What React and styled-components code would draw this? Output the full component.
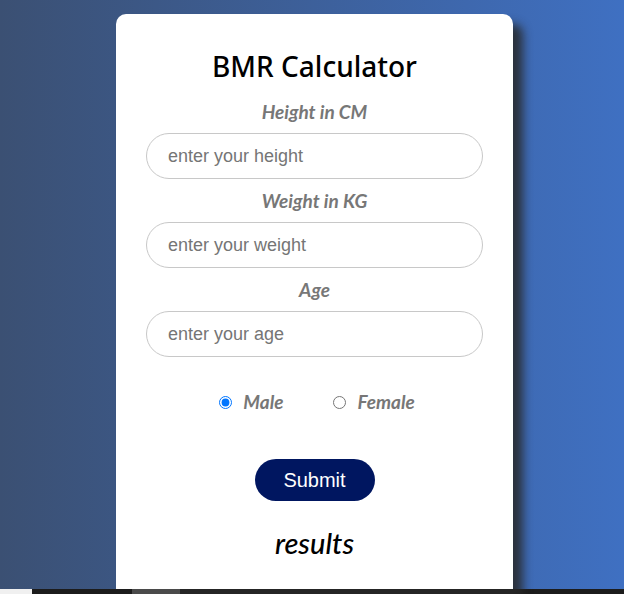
import React, { useState } from "react";
import styled, { createGlobalStyle } from "styled-components";

const GlobalStyle = createGlobalStyle`
  html, body {
    margin: 0;
    padding: 0;
    overflow: hidden;
  }
  body {
    font-family: "Liberation Sans", Arial, sans-serif;
  }
`;

function App() {
  const [gender, setGender] = useState("male");

  return (
    <>
      <GlobalStyle />
      <Page>
        <Card>
          <Title>BMR Calculator</Title>
          <Label htmlFor="height">Height in CM</Label>
          <Input id="height" type="number" placeholder="enter your height" />
          <Label htmlFor="weight">Weight in KG</Label>
          <Input id="weight" type="number" placeholder="enter your weight" />
          <Label htmlFor="age">Age</Label>
          <Input id="age" type="number" placeholder="enter your age" />

          <RadioRow>
            <RadioOption>
              <Radio
                type="radio"
                name="gender"
                checked={gender === "male"}
                onChange={() => setGender("male")}
              />
              Male
            </RadioOption>
            <RadioOption>
              <Radio
                type="radio"
                name="gender"
                checked={gender === "female"}
                onChange={() => setGender("female")}
              />
              Female
            </RadioOption>
          </RadioRow>

          <SubmitButton type="button">Submit</SubmitButton>
          <Results>results</Results>
        </Card>
      </Page>
      <BottomBar>
        <BarPiece $width={32} $color="#f0f0f0" />
        <BarPiece $width={100} $color="#1c1c1c" />
        <BarPiece $width={48} $color="#4a4a4a" />
      </BottomBar>
    </>
  );
}

export default App;

const Page = styled.main`
  background: linear-gradient(to right, #3b5073, #3f70c2);
  display: flex;
  justify-content: center;
  height: 589px;
  padding-top: 14px;
  box-sizing: border-box;
`;

const Card = styled.section`
  background: #fff;
  border-radius: 10px 10px 0 0;
  box-shadow: 10px 10px 10px rgba(40, 40, 40, 0.85);
  box-sizing: border-box;
  display: flex;
  flex-direction: column;
  align-items: center;
  margin-left: 5px;
  padding: 35px 30px 0;
  width: 397px;
`;

const Title = styled.h1`
  color: #000;
  font-family: "Noto Sans", "Open Sans", sans-serif;
  font-size: 28px;
  font-weight: 500;
  line-height: 34px;
  margin: 0 0 18px;
`;

const Label = styled.label`
  color: #777;
  font-family: Lato, "Open Sans", sans-serif;
  font-size: 19px;
  font-style: italic;
  font-weight: 700;
  line-height: 22px;
  margin-bottom: 10px;

  input + & {
    margin-top: 11px;
  }
`;

const Input = styled.input`
  border: 1px solid #c8c8c8;
  border-radius: 23px;
  box-sizing: border-box;
  font-family: "Liberation Sans", Arial, sans-serif;
  font-size: 18px;
  height: 46px;
  outline: none;
  padding: 0 21px;
  width: 337px;

  &::placeholder {
    color: #757575;
  }
`;

const RadioRow = styled.div`
  display: flex;
  gap: 50px;
  margin: 34px 0 0 5px;
`;

const RadioOption = styled.label`
  align-items: center;
  color: #777;
  display: flex;
  font-family: Lato, "Open Sans", sans-serif;
  font-size: 19px;
  font-style: italic;
  font-weight: 700;
  gap: 11px;
  line-height: 22px;
`;

const Radio = styled.input`
  margin: 0;
  width: 13px;
  height: 13px;
`;

const SubmitButton = styled.button`
  background: #001660;
  border: none;
  border-radius: 21px;
  color: #fff;
  cursor: pointer;
  font-family: "Liberation Sans", Arial, sans-serif;
  font-size: 20px;
  height: 42px;
  margin-top: 46px;
  width: 120px;
`;

const Results = styled.h2`
  color: #000;
  font-family: Lato, "Open Sans", sans-serif;
  font-size: 29px;
  font-style: italic;
  font-weight: 500;
  line-height: 34px;
  margin: 25px 0 0;
`;

const BottomBar = styled.footer`
  background: #1c1c1c;
  display: flex;
  height: 5px;
`;

const BarPiece = styled.div`
  background: ${(p) => p.$color};
  width: ${(p) => p.$width}px;
`;
